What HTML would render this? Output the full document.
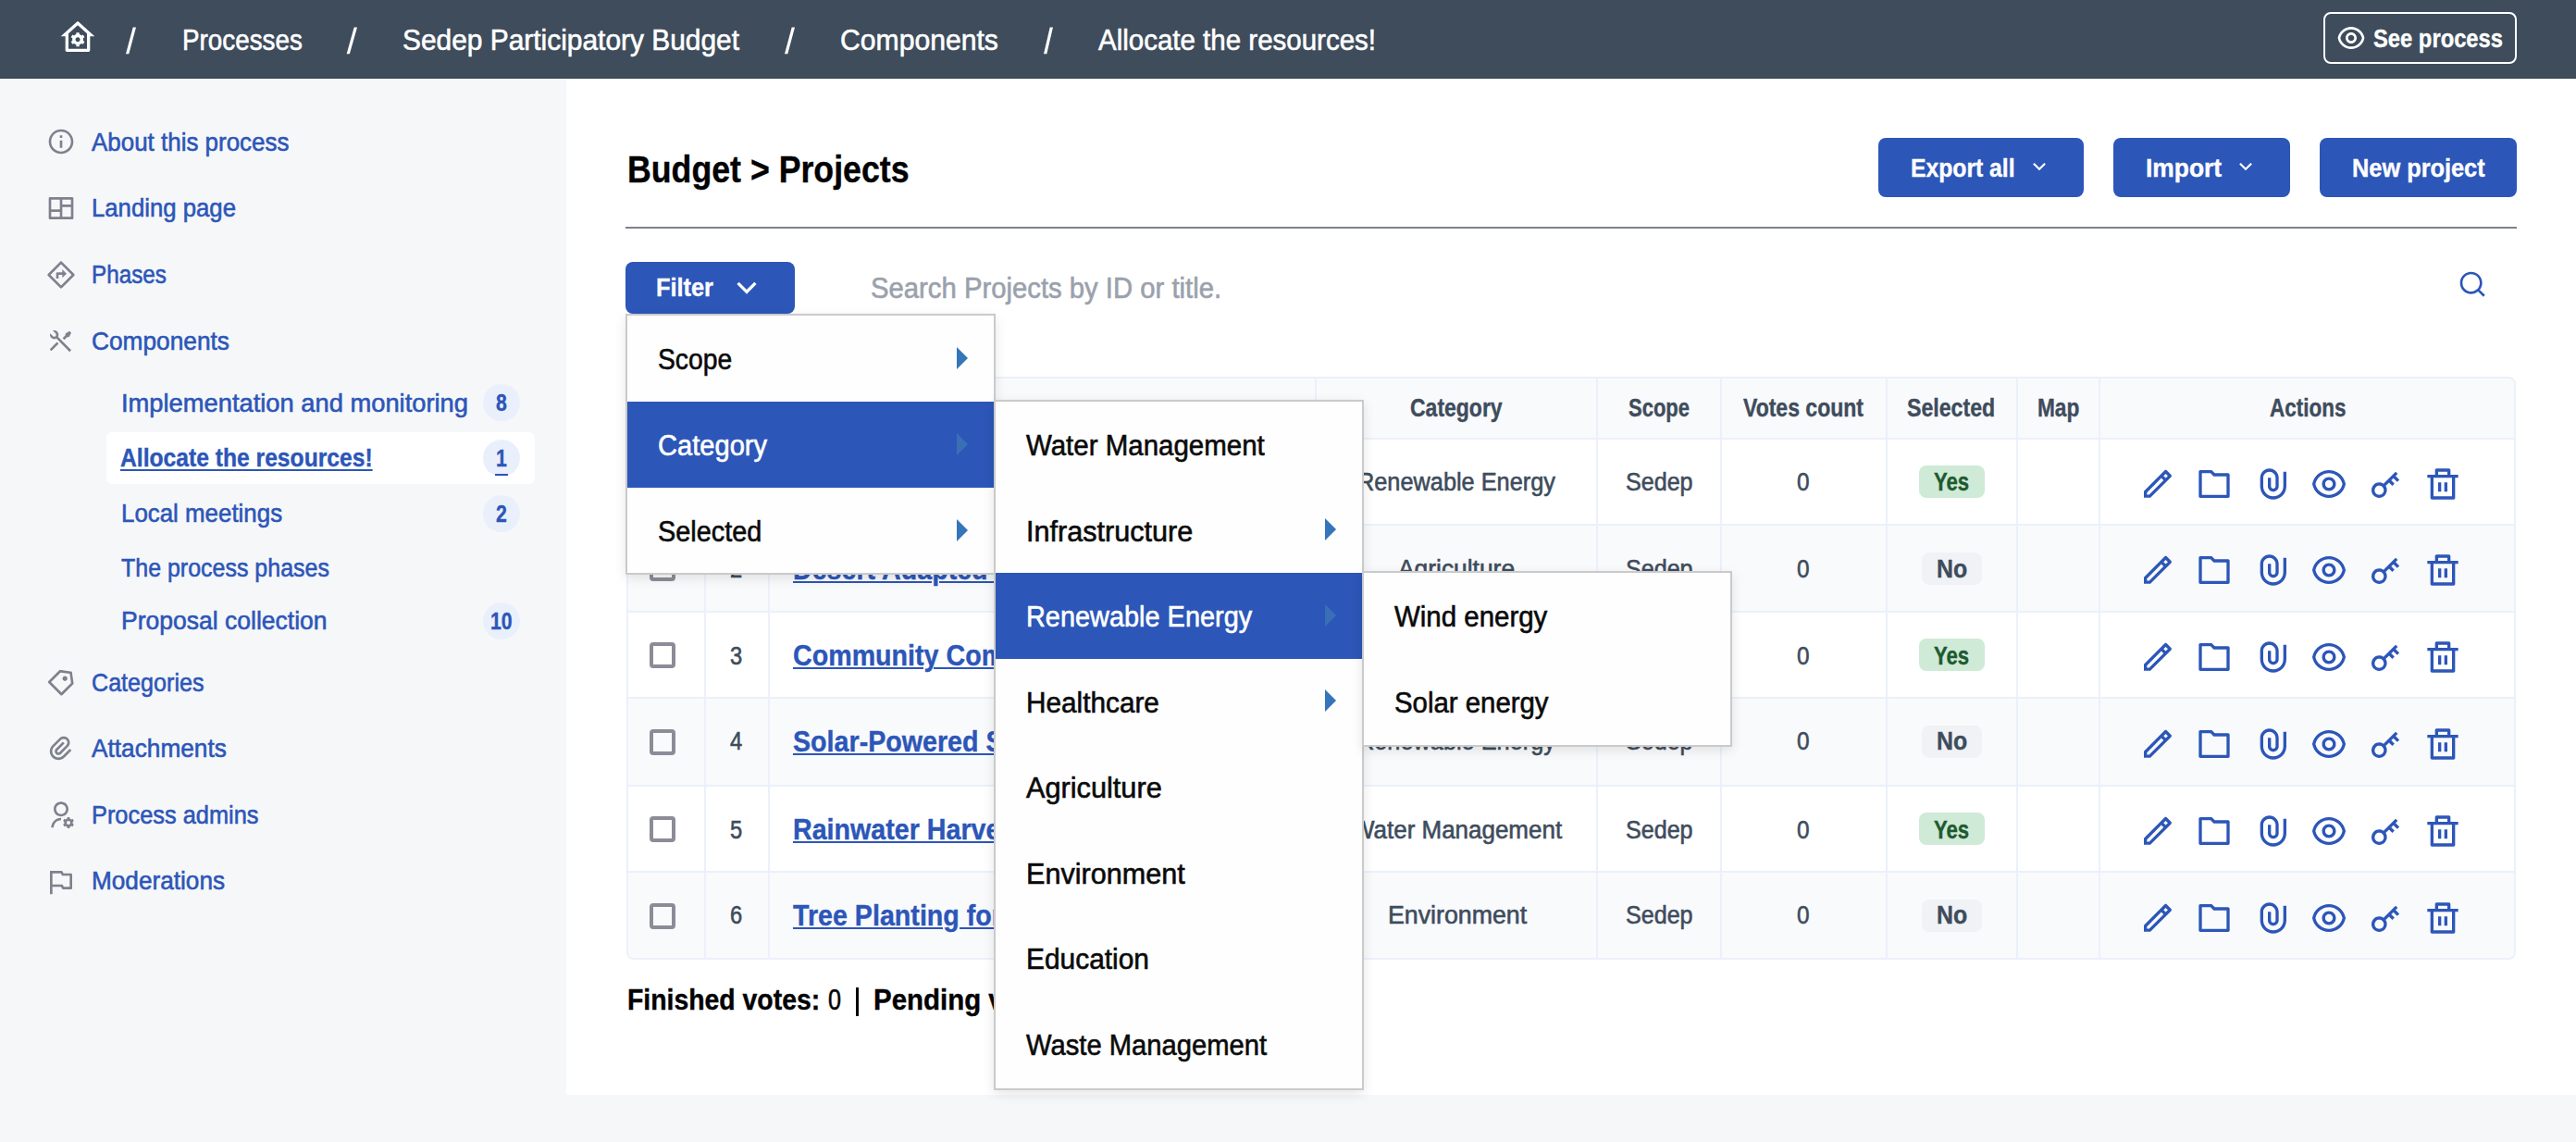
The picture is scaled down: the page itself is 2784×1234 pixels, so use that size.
<!DOCTYPE html>
<html><head><meta charset="utf-8"><style>
html,body{margin:0;padding:0;width:2784px;height:1234px;overflow:hidden;background:#fff}
body{position:relative;font-family:"Liberation Sans",sans-serif}
.t{position:absolute;white-space:nowrap;transform-origin:0 0;-webkit-text-stroke:0.6px}
.b{-webkit-text-stroke:0.4px}
</style></head><body>
<div style="position:absolute;left:0px;top:0px;width:2784px;height:84px;background:#3e4c5c"></div>
<div style="position:absolute;left:0px;top:84px;width:2784px;height:1px;background:#323d4c"></div>
<div style="position:absolute;left:0px;top:85px;width:2784px;height:1px;background:#fff"></div>
<div style="position:absolute;left:0px;top:86px;width:612px;height:1148px;background:#f6f7f9"></div>
<div style="position:absolute;left:612px;top:85px;width:2172px;height:1098px;background:#fff"></div>
<div style="position:absolute;left:612px;top:1183px;width:2172px;height:51px;background:#f6f7f9"></div>
<svg style="position:absolute;left:64px;top:21px;" width="40" height="40" viewBox="0 0 24 24" fill="#fff"><path d="M19 21H5C4.44772 21 4 20.5523 4 20V11L1 11L11.3273 1.6115C11.7087 1.26475 12.2913 1.26475 12.6727 1.6115L23 11L20 11V20C20 20.5523 19.5523 21 19 21ZM6 19H18V9.15745L12 3.70291L6 9.15745V19ZM8.59117 13.8089C8.52937 13.5487 8.49666 13.2783 8.49666 13C8.49666 12.7217 8.52933 12.4513 8.59107 12.1911L7.6 11.6179L8.6 9.88756L9.59186 10.4613C9.98729 10.0705 10.4831 9.78353 11.0363 9.63951V8.5H13.0363V9.63951C13.5894 9.78353 14.0852 10.0705 14.4807 10.4613L15.4725 9.88756L16.4725 11.6179L15.4815 12.1911C15.5432 12.4513 15.5759 12.7217 15.5759 13C15.5759 13.2783 15.5432 13.5487 15.4814 13.8089L16.4725 14.3821L15.4725 16.1124L14.4807 15.5387C14.0852 15.9295 13.5894 16.2165 13.0363 16.3605V17.5H11.0363V16.3605C10.4831 16.2165 9.98729 15.9295 9.59186 15.5387L8.6 16.1124L7.6 14.3821L8.59117 13.8089ZM12.0363 14.5C12.8648 14.5 13.5363 13.8284 13.5363 13C13.5363 12.1716 12.8648 11.5 12.0363 11.5C11.2081 11.5 10.5363 12.1716 10.5363 13C10.5363 13.8284 11.2081 14.5 12.0363 14.5Z"/></svg>
<svg style="position:absolute;left:0;top:0" width="149" height="62"><polygon points="143.7,29.5 147,29.5 139.3,58.2 136,58.2" fill="#fff"/></svg>
<svg style="position:absolute;left:0;top:0" width="388" height="62"><polygon points="382.7,29.5 386,29.5 377.90000000000003,58.2 374.6,58.2" fill="#fff"/></svg>
<svg style="position:absolute;left:0;top:0" width="861" height="62"><polygon points="855.7,29.5 859,29.5 851.3,58.2 848,58.2" fill="#fff"/></svg>
<svg style="position:absolute;left:0;top:0" width="1140" height="62"><polygon points="1134.7,29.5 1138,29.5 1131.3,58.2 1128,58.2" fill="#fff"/></svg>
<div class="t" style="left:197.00px;top:26.51px;font-size:32px;line-height:32px;color:#fff;transform:scaleX(0.8696);">Processes</div>
<div class="t" style="left:435.00px;top:26.51px;font-size:32px;line-height:32px;color:#fff;transform:scaleX(0.9345);">Sedep Participatory Budget</div>
<div class="t" style="left:908.00px;top:26.51px;font-size:32px;line-height:32px;color:#fff;transform:scaleX(0.9421);">Components</div>
<div class="t" style="left:1187.00px;top:26.51px;font-size:32px;line-height:32px;color:#fff;transform:scaleX(0.9217);">Allocate the resources!</div>
<div style="position:absolute;left:2511px;top:13px;width:209px;height:56px;box-sizing:border-box;border:2px solid #fff;border-radius:8px"></div>
<svg style="position:absolute;left:2525px;top:25px;" width="32" height="32" viewBox="0 0 24 24" fill="#fff"><path d="M12.0003 3C17.3924 3 21.8784 6.87976 22.8189 12C21.8784 17.1202 17.3924 21 12.0003 21C6.60812 21 2.12215 17.1202 1.18164 12C2.12215 6.87976 6.60812 3 12.0003 3ZM12.0003 19C16.2359 19 19.8603 16.052 20.7777 12C19.8603 7.94803 16.2359 5 12.0003 5C7.7646 5 4.14022 7.94803 3.22278 12C4.14022 16.052 7.7646 19 12.0003 19ZM12.0003 16.5C9.51498 16.5 7.50026 14.4853 7.50026 12C7.50026 9.51472 9.51498 7.5 12.0003 7.5C14.4855 7.5 16.5003 9.51472 16.5003 12C16.5003 14.4853 14.4855 16.5 12.0003 16.5ZM12.0003 14.5C13.381 14.5 14.5003 13.3807 14.5003 12C14.5003 10.6193 13.381 9.5 12.0003 9.5C10.6196 9.5 9.50026 10.6193 9.50026 12C9.50026 13.3807 10.6196 14.5 12.0003 14.5Z"/></svg>
<div class="t b" style="left:2565.00px;top:27.50px;font-size:28px;line-height:28px;font-weight:700;color:#fff;transform:scaleX(0.8485);">See process</div>
<svg style="position:absolute;left:50px;top:137px;" width="32" height="32" viewBox="0 0 24 24" fill="#7d828d"><path d="M12 22C6.47715 22 2 17.5228 2 12C2 6.47715 6.47715 2 12 2C17.5228 2 22 6.47715 22 12C22 17.5228 17.5228 22 12 22ZM12 20C16.4183 20 20 16.4183 20 12C20 7.58172 16.4183 4 12 4C7.58172 4 4 7.58172 4 12C4 16.4183 7.58172 20 12 20ZM11 7H13V9H11V7ZM11 11H13V17H11V11Z"/></svg>
<div class="t" style="left:98.60px;top:139.60px;font-size:28px;line-height:28px;color:#2c56b8;transform:scaleX(0.9268);">About this process</div>
<svg style="position:absolute;left:50px;top:209px;" width="32" height="32" viewBox="0 0 24 24" fill="#7d828d"><path d="M22 20C22 20.5523 21.5523 21 21 21H3C2.44772 21 2 20.5523 2 20V4C2 3.44772 2.44772 3 3 3H21C21.5523 3 22 3.44772 22 4V20ZM11 15H4V19H11V15ZM20 11H13V19H20V11ZM11 5H4V13H11V5ZM20 5H13V9H20V5Z"/></svg>
<div class="t" style="left:99.00px;top:211.30px;font-size:28px;line-height:28px;color:#2c56b8;transform:scaleX(0.9190);">Landing page</div>
<svg style="position:absolute;left:50px;top:281px;" width="32" height="32" viewBox="0 0 24 24" fill="#7d828d"><path d="M12.7071 1.29289L22.7071 11.2929C23.0976 11.6834 23.0976 12.3166 22.7071 12.7071L12.7071 22.7071C12.3166 23.0976 11.6834 23.0976 11.2929 22.7071L1.29289 12.7071C0.902369 12.3166 0.902369 11.6834 1.29289 11.2929L11.2929 1.29289C11.6834 0.902369 12.3166 0.902369 12.7071 1.29289ZM12 3.41421L3.41421 12L12 20.5858L20.5858 12L12 3.41421ZM13 10V7.5L16.5 11L13 14.5V12H10V15H8V11C8 10.4477 8.44772 10 9 10H13Z"/></svg>
<div class="t" style="left:99.00px;top:283.30px;font-size:28px;line-height:28px;color:#2c56b8;transform:scaleX(0.8663);">Phases</div>
<svg style="position:absolute;left:50px;top:353px;" width="32" height="32" viewBox="0 0 24 24" fill="#7d828d"><path d="M5.32943 3.27158C6.56252 2.8332 7.9923 3.10749 8.97927 4.09446C10.1002 5.21537 10.3019 6.90741 9.58508 8.23385L20.3019 18.9507L18.8877 20.3649L8.17083 9.64806C6.84469 10.3623 5.15422 10.1599 4.03394 9.03964C3.04668 8.05238 2.77246 6.62192 3.21127 5.38853L5.44893 7.62632C6.03472 8.21211 6.98446 8.21211 7.57025 7.62632C8.15603 7.04054 8.15603 6.09079 7.57025 5.50501L5.32943 3.27158ZM15.6963 5.35742L18.8783 3.58965L20.2925 5.00386L18.5247 8.18584L16.757 8.53939L14.6356 10.6607L13.2214 9.24652L15.3427 7.12521L15.6963 5.35742ZM8.62815 12.4285L10.0424 13.8427L4.7391 19.1465C4.34858 19.537 3.71542 19.537 3.32489 19.1465C2.96641 18.788 2.93654 18.2248 3.23522 17.8322L3.32489 17.7323L8.62815 12.4285Z"/></svg>
<div class="t" style="left:99.00px;top:354.80px;font-size:28px;line-height:28px;color:#2c56b8;transform:scaleX(0.9386);">Components</div>
<svg style="position:absolute;left:50px;top:721px;" width="32" height="32" viewBox="0 0 24 24" fill="#7d828d"><path d="M10.9042 2.1001L20.8037 3.51431L22.2179 13.4138L13.0255 22.6062C12.635 22.9967 12.0019 22.9967 11.6113 22.6062L1.71184 12.7067C1.32131 12.3162 1.32131 11.683 1.71184 11.2925L10.9042 2.1001ZM11.6113 4.22142L3.83316 11.9996L12.3184 20.4849L20.0966 12.7067L19.036 5.28208L11.6113 4.22142ZM13.7327 10.5854C12.9516 9.80433 12.9516 8.538 13.7327 7.75695C14.5137 6.9759 15.78 6.9759 16.5611 7.75695C17.3421 8.538 17.3421 9.80433 16.5611 10.5854C15.78 11.3664 14.5137 11.3664 13.7327 10.5854Z"/></svg>
<div class="t" style="left:98.80px;top:723.60px;font-size:28px;line-height:28px;color:#2c56b8;transform:scaleX(0.8974);">Categories</div>
<svg style="position:absolute;left:50px;top:793px;" width="32" height="32" viewBox="0 0 24 24" fill="#7d828d"><path d="M14.8287 7.75737L9.1718 13.4142C8.78127 13.8047 8.78127 14.4379 9.1718 14.8284C9.56232 15.219 10.1955 15.219 10.586 14.8284L16.2429 9.17158C17.4144 8.00001 17.4144 6.10052 16.2429 4.92894C15.0713 3.75737 13.1718 3.75737 12.0002 4.92894L6.34337 10.5858C4.39075 12.5384 4.39075 15.7042 6.34337 17.6569C8.29599 19.6095 11.4618 19.6095 13.4144 17.6569L19.0713 12L20.4855 13.4142L14.8287 19.0711C12.095 21.8047 7.66283 21.8047 4.92916 19.0711C2.19549 16.3374 2.19549 11.9052 4.92916 9.17158L10.586 3.51473C12.5386 1.56211 15.7045 1.56211 17.6571 3.51473C19.6097 5.46735 19.6097 8.63317 17.6571 10.5858L12.0002 16.2427C10.8287 17.4142 8.92916 17.4142 7.75759 16.2427C6.58601 15.0711 6.58601 13.1716 7.75759 12L13.4144 6.34316L14.8287 7.75737Z"/></svg>
<div class="t" style="left:99.00px;top:795.00px;font-size:28px;line-height:28px;color:#2c56b8;transform:scaleX(0.9374);">Attachments</div>
<svg style="position:absolute;left:50px;top:865px;" width="32" height="32" viewBox="0 0 24 24" fill="#7d828d"><path d="M12 14V16C8.68629 16 6 18.6863 6 22H4C4 17.5817 7.58172 14 12 14ZM12 13C8.685 13 6 10.315 6 7C6 3.685 8.685 1 12 1C15.315 1 18 3.685 18 7C18 10.315 15.315 13 12 13ZM12 11C14.21 11 16 9.21 16 7C16 4.79 14.21 3 12 3C9.79 3 8 4.79 8 7C8 9.21 9.79 11 12 11ZM14.5946 18.8115C14.5327 18.5511 14.5 18.2794 14.5 18C14.5 17.7207 14.5327 17.449 14.5945 17.1886L13.6029 16.6161L14.6029 14.884L15.5952 15.4569C15.9883 15.0851 16.4708 14.8026 17.0062 14.6441V13.5H19.0062V14.6441C19.5416 14.8026 20.0241 15.0852 20.4172 15.4569L21.4095 14.884L22.4095 16.6161L21.4179 17.1886C21.4797 17.449 21.5124 17.7207 21.5124 18C21.5124 18.2794 21.4797 18.5511 21.4178 18.8115L22.4095 19.3839L21.4095 21.116L20.4172 20.5431C20.0241 20.9148 19.5416 21.1974 19.0062 21.3559V22.5H17.0062V21.3559C16.4708 21.1974 15.9883 20.9149 15.5952 20.5431L14.6029 21.116L13.6029 19.3839L14.5946 18.8115ZM18.0062 19.5C18.8346 19.5 19.5062 18.8284 19.5062 18C19.5062 17.1716 18.8346 16.5 18.0062 16.5C17.1778 16.5 16.5062 17.1716 16.5062 18C16.5062 18.8284 17.1778 19.5 18.0062 19.5Z"/></svg>
<div class="t" style="left:99.00px;top:866.70px;font-size:28px;line-height:28px;color:#2c56b8;transform:scaleX(0.9059);">Process admins</div>
<svg style="position:absolute;left:50px;top:937px;" width="32" height="32" viewBox="0 0 24 24" fill="#7d828d"><path d="M3 3H12.382C12.7607 3 13.107 3.214 13.2764 3.55279L14 5H20C20.5523 5 21 5.44772 21 6V17C21 17.5523 20.5523 18 20 18H13.618C13.2393 18 12.893 17.786 12.7236 17.4472L12 16H5V22H3V3ZM5 5V14H13.2361L14.2361 16H19V7H12.7639L11.7639 5H5Z"/></svg>
<div class="t" style="left:99.00px;top:938.30px;font-size:28px;line-height:28px;color:#2c56b8;transform:scaleX(0.9351);">Moderations</div>
<div style="position:absolute;left:114.5px;top:467px;width:463px;height:56px;background:#fff;border-radius:6px"></div>
<div class="t" style="left:131.00px;top:421.50px;font-size:28px;line-height:28px;color:#2c56b8;transform:scaleX(0.9753);">Implementation and monitoring</div>
<div style="position:absolute;left:522px;top:415px;width:40px;height:40px;background:#eaf0fb;border-radius:50%"></div>
<div class="t b" style="left:536.05px;top:423.34px;font-size:25px;line-height:25px;font-weight:700;color:#2c56b8;transform:scaleX(0.8500);">8</div>
<div class="t b" style="left:130.00px;top:481.30px;font-size:28px;line-height:28px;font-weight:700;color:#2c56b8;transform:scaleX(0.8804);text-decoration:underline;text-decoration-thickness:2px;text-underline-offset:3px;">Allocate the resources!</div>
<div style="position:absolute;left:522px;top:475px;width:40px;height:40px;background:#eaf0fb;border-radius:50%"></div>
<div class="t b" style="left:536.05px;top:483.34px;font-size:25px;line-height:25px;font-weight:700;color:#2c56b8;transform:scaleX(0.8500);">1</div>
<div style="position:absolute;left:535px;top:512px;width:14px;height:1.5px;background:#2c56b8"></div>
<div class="t" style="left:131.00px;top:541.30px;font-size:28px;line-height:28px;color:#2c56b8;transform:scaleX(0.9243);">Local meetings</div>
<div style="position:absolute;left:522px;top:535px;width:40px;height:40px;background:#eaf0fb;border-radius:50%"></div>
<div class="t b" style="left:536.05px;top:543.34px;font-size:25px;line-height:25px;font-weight:700;color:#2c56b8;transform:scaleX(0.8500);">2</div>
<div class="t" style="left:131.00px;top:599.60px;font-size:28px;line-height:28px;color:#2c56b8;transform:scaleX(0.8920);">The process phases</div>
<div class="t" style="left:131.00px;top:657.30px;font-size:28px;line-height:28px;color:#2c56b8;transform:scaleX(0.9468);">Proposal collection</div>
<div style="position:absolute;left:522px;top:651px;width:40px;height:40px;background:#eaf0fb;border-radius:50%"></div>
<div class="t b" style="left:530.21px;top:659.34px;font-size:25px;line-height:25px;font-weight:700;color:#2c56b8;transform:scaleX(0.8500);">10</div>
<div class="t b" style="left:678.00px;top:162.84px;font-size:40px;line-height:40px;font-weight:700;color:#020203;transform:scaleX(0.8926);">Budget &gt; Projects</div>
<div style="position:absolute;left:676px;top:245px;width:2044px;height:2px;background:#7d828d"></div>
<div style="position:absolute;left:2030px;top:149px;width:222px;height:64px;background:#2c56b8;border-radius:8px"></div>
<div class="t b" style="left:2064.50px;top:167.80px;font-size:28px;line-height:28px;font-weight:700;color:#fff;transform:scaleX(0.8824);">Export all</div>
<svg style="position:absolute;left:2191px;top:167px;" width="26" height="26" viewBox="0 0 24 24" fill="#fff"><path d="M12 13.1716L16.9497 8.22183L18.3639 9.63604L12 16L5.63604 9.63604L7.05025 8.22183L12 13.1716Z"/></svg>
<div style="position:absolute;left:2284px;top:149px;width:191px;height:64px;background:#2c56b8;border-radius:8px"></div>
<div class="t b" style="left:2319.00px;top:167.80px;font-size:28px;line-height:28px;font-weight:700;color:#fff;transform:scaleX(0.9425);">Import</div>
<svg style="position:absolute;left:2414px;top:167px;" width="26" height="26" viewBox="0 0 24 24" fill="#fff"><path d="M12 13.1716L16.9497 8.22183L18.3639 9.63604L12 16L5.63604 9.63604L7.05025 8.22183L12 13.1716Z"/></svg>
<div style="position:absolute;left:2507px;top:149px;width:213px;height:64px;background:#2c56b8;border-radius:8px"></div>
<div class="t b" style="left:2542.00px;top:167.80px;font-size:28px;line-height:28px;font-weight:700;color:#fff;transform:scaleX(0.9052);">New project</div>
<div style="position:absolute;left:676px;top:283px;width:183px;height:56px;background:#2c56b8;border-radius:8px"></div>
<div class="t b" style="left:709.40px;top:297.00px;font-size:28px;line-height:28px;font-weight:700;color:#fff;transform:scaleX(0.9051);">Filter</div>
<svg style="position:absolute;left:787px;top:291px;" width="40" height="40" viewBox="0 0 24 24" fill="#fff"><path d="M12 13.1716L16.9497 8.22183L18.3639 9.63604L12 16L5.63604 9.63604L7.05025 8.22183L12 13.1716Z"/></svg>
<div class="t" style="left:940.50px;top:296.46px;font-size:31px;line-height:31px;color:#9aa1ac;transform:scaleX(0.9445);">Search Projects by ID or title.</div>
<svg style="position:absolute;left:2656px;top:291px;" width="32" height="32" viewBox="0 0 24 24" fill="#2c56b8"><path d="M18.031 16.6168L22.3137 20.8995L20.8995 22.3137L16.6168 18.031C15.0769 19.263 13.124 20 11 20C6.032 20 2 15.968 2 11C2 6.032 6.032 2 11 2C15.968 2 20 6.032 20 11C20 13.124 19.263 15.0769 18.031 16.6168ZM16.0247 15.8748C17.2475 14.6146 18 12.8956 18 11C18 7.1325 14.8675 4 11 4C7.1325 4 4 7.1325 4 11C4 14.8675 7.1325 18 11 18C12.8956 18 14.6146 17.2475 15.8748 16.0247L16.0247 15.8748Z"/></svg>
<div style="position:absolute;left:677px;top:407px;width:2042px;height:630px;box-sizing:border-box;border:2px solid #ebf0fb;border-radius:8px;background:#fff;overflow:hidden"></div>
<div style="position:absolute;left:679px;top:409px;width:2038px;height:65px;background:#f9fafc;border-radius:6px 6px 0 0"></div>
<div style="position:absolute;left:679px;top:567px;width:2038px;height:94px;background:#f9fafc;"></div>
<div style="position:absolute;left:679px;top:754px;width:2038px;height:95px;background:#f9fafc;"></div>
<div style="position:absolute;left:679px;top:942px;width:2038px;height:93px;background:#f9fafc;border-radius:0 0 6px 6px;"></div>
<div style="position:absolute;left:679px;top:473px;width:2038px;height:2px;background:#ebf0fb"></div>
<div style="position:absolute;left:679px;top:566px;width:2038px;height:2px;background:#ebf0fb"></div>
<div style="position:absolute;left:679px;top:660px;width:2038px;height:2px;background:#ebf0fb"></div>
<div style="position:absolute;left:679px;top:753px;width:2038px;height:2px;background:#ebf0fb"></div>
<div style="position:absolute;left:679px;top:848px;width:2038px;height:2px;background:#ebf0fb"></div>
<div style="position:absolute;left:679px;top:941px;width:2038px;height:2px;background:#ebf0fb"></div>
<div style="position:absolute;left:761px;top:409px;width:2px;height:626px;background:#ebf0fb"></div>
<div style="position:absolute;left:830px;top:409px;width:2px;height:626px;background:#ebf0fb"></div>
<div style="position:absolute;left:1420.7px;top:409px;width:2px;height:626px;background:#ebf0fb"></div>
<div style="position:absolute;left:1725px;top:409px;width:2px;height:626px;background:#ebf0fb"></div>
<div style="position:absolute;left:1859px;top:409px;width:2px;height:626px;background:#ebf0fb"></div>
<div style="position:absolute;left:2037.7px;top:409px;width:2px;height:626px;background:#ebf0fb"></div>
<div style="position:absolute;left:2179px;top:409px;width:2px;height:626px;background:#ebf0fb"></div>
<div style="position:absolute;left:2268px;top:409px;width:2px;height:626px;background:#ebf0fb"></div>
<div class="t b" style="left:1524.00px;top:428.14px;font-size:27px;line-height:27px;font-weight:700;color:#3e4c5c;transform:scaleX(0.8513);">Category</div>
<div class="t b" style="left:1760.00px;top:428.14px;font-size:27px;line-height:27px;font-weight:700;color:#3e4c5c;transform:scaleX(0.8148);">Scope</div>
<div class="t b" style="left:1884.00px;top:428.14px;font-size:27px;line-height:27px;font-weight:700;color:#3e4c5c;transform:scaleX(0.8525);">Votes count</div>
<div class="t b" style="left:2061.40px;top:428.14px;font-size:27px;line-height:27px;font-weight:700;color:#3e4c5c;transform:scaleX(0.8568);">Selected</div>
<div class="t b" style="left:2201.70px;top:428.14px;font-size:27px;line-height:27px;font-weight:700;color:#3e4c5c;transform:scaleX(0.8389);">Map</div>
<div class="t b" style="left:2452.60px;top:428.14px;font-size:27px;line-height:27px;font-weight:700;color:#3e4c5c;transform:scaleX(0.8323);">Actions</div>
<div class="t b" style="left:784.93px;top:428.14px;font-size:27px;line-height:27px;font-weight:700;color:#3e4c5c;transform:scaleX(0.8200);">ID</div>
<div class="t b" style="left:856.00px;top:428.14px;font-size:27px;line-height:27px;font-weight:700;color:#3e4c5c;transform:scaleX(0.8200);">Title</div>
<div style="position:absolute;left:702px;top:506.5px;width:28px;height:28px;box-sizing:border-box;border:4px solid #8b8c97;border-radius:4px"></div>
<div class="t" style="left:789.40px;top:508.44px;font-size:27px;line-height:27px;color:#3e4c5c;transform:scaleX(0.8800);">1</div>
<div class="t b" style="left:857.00px;top:505.21px;font-size:32px;line-height:32px;font-weight:700;color:#2c56b8;transform:scaleX(0.8950);text-decoration:underline;text-decoration-thickness:2px;text-underline-offset:2px;">Sustainable Urban Farming</div>
<div class="t" style="left:1467.00px;top:508.44px;font-size:27px;line-height:27px;color:#3e4c5c;transform:scaleX(0.9376);">Renewable Energy</div>
<div class="t" style="left:1756.80px;top:508.44px;font-size:27px;line-height:27px;color:#3e4c5c;transform:scaleX(0.9295);">Sedep</div>
<div class="t" style="left:1942.25px;top:508.44px;font-size:27px;line-height:27px;color:#3e4c5c;transform:scaleX(0.9000);">0</div>
<div style="position:absolute;left:2074px;top:503.0px;width:71px;height:35px;background:#cfead6;border-radius:8px"></div>
<div class="t b" style="left:2090.43px;top:508.44px;font-size:27px;line-height:27px;font-weight:700;color:#1f5a30;transform:scaleX(0.8200);">Yes</div>
<svg style="position:absolute;left:2312px;top:502.5px;" width="40" height="40" viewBox="0 0 24 24" fill="#2c56b8"><path d="M15.7279 9.57627L14.3137 8.16206L5 17.4758V18.89H6.41421L15.7279 9.57627ZM17.1421 8.16206L18.5563 6.74785L17.1421 5.33363L15.7279 6.74785L17.1421 8.16206ZM7.24264 20.89H3V16.6473L16.435 3.21231C16.8256 2.82179 17.4587 2.82179 17.8492 3.21231L20.6777 6.04074C21.0682 6.43126 21.0682 7.06443 20.6777 7.45495L7.24264 20.89Z"/></svg>
<svg style="position:absolute;left:2373px;top:502.5px;" width="40" height="40" viewBox="0 0 24 24" fill="#2c56b8"><path d="M4 5V19H20V7H11.5858L9.58579 5H4ZM12.4142 5H21C21.5523 5 22 5.44772 22 6V20C22 20.5523 21.5523 21 21 21H3C2.44772 21 2 20.5523 2 20V4C2 3.44772 2.44772 3 3 3H10.4142L12.4142 5Z"/></svg>
<svg style="position:absolute;left:2436px;top:502.5px;" width="40" height="40" viewBox="0 0 24 24" fill="#2c56b8"><path d="M14 13.5V8C14 5.79086 12.2091 4 10 4C7.79086 4 6 5.79086 6 8V13.5C6 17.0899 8.91015 20 12.5 20C16.0899 20 19 17.0899 19 13.5V4H21V13.5C21 18.1944 17.1944 22 12.5 22C7.80558 22 4 18.1944 4 13.5V8C4 4.68629 6.68629 2 10 2C13.3137 2 16 4.68629 16 8V13.5C16 15.433 14.433 17 12.5 17C10.567 17 9 15.433 9 13.5V8H11V13.5C11 14.3284 11.6716 15 12.5 15C13.3284 15 14 14.3284 14 13.5Z"/></svg>
<svg style="position:absolute;left:2497px;top:502.5px;" width="40" height="40" viewBox="0 0 24 24" fill="#2c56b8"><path d="M12.0003 3C17.3924 3 21.8784 6.87976 22.8189 12C21.8784 17.1202 17.3924 21 12.0003 21C6.60812 21 2.12215 17.1202 1.18164 12C2.12215 6.87976 6.60812 3 12.0003 3ZM12.0003 19C16.2359 19 19.8603 16.052 20.7777 12C19.8603 7.94803 16.2359 5 12.0003 5C7.7646 5 4.14022 7.94803 3.22278 12C4.14022 16.052 7.7646 19 12.0003 19ZM12.0003 16.5C9.51498 16.5 7.50026 14.4853 7.50026 12C7.50026 9.51472 9.51498 7.5 12.0003 7.5C14.4855 7.5 16.5003 9.51472 16.5003 12C16.5003 14.4853 14.4855 16.5 12.0003 16.5ZM12.0003 14.5C13.381 14.5 14.5003 13.3807 14.5003 12C14.5003 10.6193 13.381 9.5 12.0003 9.5C10.6196 9.5 9.50026 10.6193 9.50026 12C9.50026 13.3807 10.6196 14.5 12.0003 14.5Z"/></svg>
<svg style="position:absolute;left:2558px;top:502.5px;" width="40" height="40" viewBox="0 0 24 24" fill="#2c56b8"><path d="M10.7577 11.8281L18.6066 3.97919L20.0208 5.3934L18.6066 6.80761L21.0815 9.28249L19.6673 10.6967L17.1924 8.22183L15.7782 9.63604L17.8995 11.7574L16.4853 13.1716L14.364 11.0503L12.1719 13.2423C13.4581 15.1837 13.246 17.8251 11.5355 19.5355C9.58291 21.4882 6.41709 21.4882 4.46447 19.5355C2.51184 17.5829 2.51184 14.4171 4.46447 12.4645C6.17493 10.754 8.81633 10.5419 10.7577 11.8281ZM10.1213 18.1213C11.2929 16.9497 11.2929 15.0503 10.1213 13.8787C8.94975 12.7071 7.05025 12.7071 5.87868 13.8787C4.70711 15.0503 4.70711 16.9497 5.87868 18.1213C7.05025 19.2929 8.94975 19.2929 10.1213 18.1213Z"/></svg>
<svg style="position:absolute;left:2620px;top:502.5px;" width="40" height="40" viewBox="0 0 24 24" fill="#2c56b8"><path d="M17 6H22V8H20V21C20 21.5523 19.5523 22 19 22H5C4.44772 22 4 21.5523 4 21V8H2V6H7V3C7 2.44772 7.44772 2 8 2H16C16.5523 2 17 2.44772 17 3V6ZM18 8H6V20H18V8ZM9 11H11V17H9V11ZM13 11H15V17H13V11ZM9 4V6H15V4H9Z"/></svg>
<div style="position:absolute;left:702px;top:600.0px;width:28px;height:28px;box-sizing:border-box;border:4px solid #8b8c97;border-radius:4px"></div>
<div class="t" style="left:789.40px;top:602.04px;font-size:27px;line-height:27px;color:#3e4c5c;transform:scaleX(0.8800);">2</div>
<div class="t b" style="left:857.00px;top:598.81px;font-size:32px;line-height:32px;font-weight:700;color:#2c56b8;transform:scaleX(0.8950);text-decoration:underline;text-decoration-thickness:2px;text-underline-offset:2px;">Desert Adapted Agriculture</div>
<div class="t" style="left:1511.00px;top:602.04px;font-size:27px;line-height:27px;color:#3e4c5c;transform:scaleX(0.9767);">Agriculture</div>
<div class="t" style="left:1756.80px;top:602.04px;font-size:27px;line-height:27px;color:#3e4c5c;transform:scaleX(0.9295);">Sedep</div>
<div class="t" style="left:1942.25px;top:602.04px;font-size:27px;line-height:27px;color:#3e4c5c;transform:scaleX(0.9000);">0</div>
<div style="position:absolute;left:2077px;top:596.5px;width:65px;height:35px;background:#f0f2f5;border-radius:8px"></div>
<div class="t b" style="left:2092.94px;top:602.04px;font-size:27px;line-height:27px;font-weight:700;color:#3e4c5c;transform:scaleX(0.9200);">No</div>
<svg style="position:absolute;left:2312px;top:596.0px;" width="40" height="40" viewBox="0 0 24 24" fill="#2c56b8"><path d="M15.7279 9.57627L14.3137 8.16206L5 17.4758V18.89H6.41421L15.7279 9.57627ZM17.1421 8.16206L18.5563 6.74785L17.1421 5.33363L15.7279 6.74785L17.1421 8.16206ZM7.24264 20.89H3V16.6473L16.435 3.21231C16.8256 2.82179 17.4587 2.82179 17.8492 3.21231L20.6777 6.04074C21.0682 6.43126 21.0682 7.06443 20.6777 7.45495L7.24264 20.89Z"/></svg>
<svg style="position:absolute;left:2373px;top:596.0px;" width="40" height="40" viewBox="0 0 24 24" fill="#2c56b8"><path d="M4 5V19H20V7H11.5858L9.58579 5H4ZM12.4142 5H21C21.5523 5 22 5.44772 22 6V20C22 20.5523 21.5523 21 21 21H3C2.44772 21 2 20.5523 2 20V4C2 3.44772 2.44772 3 3 3H10.4142L12.4142 5Z"/></svg>
<svg style="position:absolute;left:2436px;top:596.0px;" width="40" height="40" viewBox="0 0 24 24" fill="#2c56b8"><path d="M14 13.5V8C14 5.79086 12.2091 4 10 4C7.79086 4 6 5.79086 6 8V13.5C6 17.0899 8.91015 20 12.5 20C16.0899 20 19 17.0899 19 13.5V4H21V13.5C21 18.1944 17.1944 22 12.5 22C7.80558 22 4 18.1944 4 13.5V8C4 4.68629 6.68629 2 10 2C13.3137 2 16 4.68629 16 8V13.5C16 15.433 14.433 17 12.5 17C10.567 17 9 15.433 9 13.5V8H11V13.5C11 14.3284 11.6716 15 12.5 15C13.3284 15 14 14.3284 14 13.5Z"/></svg>
<svg style="position:absolute;left:2497px;top:596.0px;" width="40" height="40" viewBox="0 0 24 24" fill="#2c56b8"><path d="M12.0003 3C17.3924 3 21.8784 6.87976 22.8189 12C21.8784 17.1202 17.3924 21 12.0003 21C6.60812 21 2.12215 17.1202 1.18164 12C2.12215 6.87976 6.60812 3 12.0003 3ZM12.0003 19C16.2359 19 19.8603 16.052 20.7777 12C19.8603 7.94803 16.2359 5 12.0003 5C7.7646 5 4.14022 7.94803 3.22278 12C4.14022 16.052 7.7646 19 12.0003 19ZM12.0003 16.5C9.51498 16.5 7.50026 14.4853 7.50026 12C7.50026 9.51472 9.51498 7.5 12.0003 7.5C14.4855 7.5 16.5003 9.51472 16.5003 12C16.5003 14.4853 14.4855 16.5 12.0003 16.5ZM12.0003 14.5C13.381 14.5 14.5003 13.3807 14.5003 12C14.5003 10.6193 13.381 9.5 12.0003 9.5C10.6196 9.5 9.50026 10.6193 9.50026 12C9.50026 13.3807 10.6196 14.5 12.0003 14.5Z"/></svg>
<svg style="position:absolute;left:2558px;top:596.0px;" width="40" height="40" viewBox="0 0 24 24" fill="#2c56b8"><path d="M10.7577 11.8281L18.6066 3.97919L20.0208 5.3934L18.6066 6.80761L21.0815 9.28249L19.6673 10.6967L17.1924 8.22183L15.7782 9.63604L17.8995 11.7574L16.4853 13.1716L14.364 11.0503L12.1719 13.2423C13.4581 15.1837 13.246 17.8251 11.5355 19.5355C9.58291 21.4882 6.41709 21.4882 4.46447 19.5355C2.51184 17.5829 2.51184 14.4171 4.46447 12.4645C6.17493 10.754 8.81633 10.5419 10.7577 11.8281ZM10.1213 18.1213C11.2929 16.9497 11.2929 15.0503 10.1213 13.8787C8.94975 12.7071 7.05025 12.7071 5.87868 13.8787C4.70711 15.0503 4.70711 16.9497 5.87868 18.1213C7.05025 19.2929 8.94975 19.2929 10.1213 18.1213Z"/></svg>
<svg style="position:absolute;left:2620px;top:596.0px;" width="40" height="40" viewBox="0 0 24 24" fill="#2c56b8"><path d="M17 6H22V8H20V21C20 21.5523 19.5523 22 19 22H5C4.44772 22 4 21.5523 4 21V8H2V6H7V3C7 2.44772 7.44772 2 8 2H16C16.5523 2 17 2.44772 17 3V6ZM18 8H6V20H18V8ZM9 11H11V17H9V11ZM13 11H15V17H13V11ZM9 4V6H15V4H9Z"/></svg>
<div style="position:absolute;left:702px;top:693.5px;width:28px;height:28px;box-sizing:border-box;border:4px solid #8b8c97;border-radius:4px"></div>
<div class="t" style="left:789.40px;top:695.54px;font-size:27px;line-height:27px;color:#3e4c5c;transform:scaleX(0.8800);">3</div>
<div class="t b" style="left:857.00px;top:692.31px;font-size:32px;line-height:32px;font-weight:700;color:#2c56b8;transform:scaleX(0.8950);text-decoration:underline;text-decoration-thickness:2px;text-underline-offset:2px;">Community Composting Centers</div>
<div class="t" style="left:1467.00px;top:695.54px;font-size:27px;line-height:27px;color:#3e4c5c;transform:scaleX(0.9376);">Renewable Energy</div>
<div class="t" style="left:1756.80px;top:695.54px;font-size:27px;line-height:27px;color:#3e4c5c;transform:scaleX(0.9295);">Sedep</div>
<div class="t" style="left:1942.25px;top:695.54px;font-size:27px;line-height:27px;color:#3e4c5c;transform:scaleX(0.9000);">0</div>
<div style="position:absolute;left:2074px;top:690.0px;width:71px;height:35px;background:#cfead6;border-radius:8px"></div>
<div class="t b" style="left:2090.43px;top:695.54px;font-size:27px;line-height:27px;font-weight:700;color:#1f5a30;transform:scaleX(0.8200);">Yes</div>
<svg style="position:absolute;left:2312px;top:689.5px;" width="40" height="40" viewBox="0 0 24 24" fill="#2c56b8"><path d="M15.7279 9.57627L14.3137 8.16206L5 17.4758V18.89H6.41421L15.7279 9.57627ZM17.1421 8.16206L18.5563 6.74785L17.1421 5.33363L15.7279 6.74785L17.1421 8.16206ZM7.24264 20.89H3V16.6473L16.435 3.21231C16.8256 2.82179 17.4587 2.82179 17.8492 3.21231L20.6777 6.04074C21.0682 6.43126 21.0682 7.06443 20.6777 7.45495L7.24264 20.89Z"/></svg>
<svg style="position:absolute;left:2373px;top:689.5px;" width="40" height="40" viewBox="0 0 24 24" fill="#2c56b8"><path d="M4 5V19H20V7H11.5858L9.58579 5H4ZM12.4142 5H21C21.5523 5 22 5.44772 22 6V20C22 20.5523 21.5523 21 21 21H3C2.44772 21 2 20.5523 2 20V4C2 3.44772 2.44772 3 3 3H10.4142L12.4142 5Z"/></svg>
<svg style="position:absolute;left:2436px;top:689.5px;" width="40" height="40" viewBox="0 0 24 24" fill="#2c56b8"><path d="M14 13.5V8C14 5.79086 12.2091 4 10 4C7.79086 4 6 5.79086 6 8V13.5C6 17.0899 8.91015 20 12.5 20C16.0899 20 19 17.0899 19 13.5V4H21V13.5C21 18.1944 17.1944 22 12.5 22C7.80558 22 4 18.1944 4 13.5V8C4 4.68629 6.68629 2 10 2C13.3137 2 16 4.68629 16 8V13.5C16 15.433 14.433 17 12.5 17C10.567 17 9 15.433 9 13.5V8H11V13.5C11 14.3284 11.6716 15 12.5 15C13.3284 15 14 14.3284 14 13.5Z"/></svg>
<svg style="position:absolute;left:2497px;top:689.5px;" width="40" height="40" viewBox="0 0 24 24" fill="#2c56b8"><path d="M12.0003 3C17.3924 3 21.8784 6.87976 22.8189 12C21.8784 17.1202 17.3924 21 12.0003 21C6.60812 21 2.12215 17.1202 1.18164 12C2.12215 6.87976 6.60812 3 12.0003 3ZM12.0003 19C16.2359 19 19.8603 16.052 20.7777 12C19.8603 7.94803 16.2359 5 12.0003 5C7.7646 5 4.14022 7.94803 3.22278 12C4.14022 16.052 7.7646 19 12.0003 19ZM12.0003 16.5C9.51498 16.5 7.50026 14.4853 7.50026 12C7.50026 9.51472 9.51498 7.5 12.0003 7.5C14.4855 7.5 16.5003 9.51472 16.5003 12C16.5003 14.4853 14.4855 16.5 12.0003 16.5ZM12.0003 14.5C13.381 14.5 14.5003 13.3807 14.5003 12C14.5003 10.6193 13.381 9.5 12.0003 9.5C10.6196 9.5 9.50026 10.6193 9.50026 12C9.50026 13.3807 10.6196 14.5 12.0003 14.5Z"/></svg>
<svg style="position:absolute;left:2558px;top:689.5px;" width="40" height="40" viewBox="0 0 24 24" fill="#2c56b8"><path d="M10.7577 11.8281L18.6066 3.97919L20.0208 5.3934L18.6066 6.80761L21.0815 9.28249L19.6673 10.6967L17.1924 8.22183L15.7782 9.63604L17.8995 11.7574L16.4853 13.1716L14.364 11.0503L12.1719 13.2423C13.4581 15.1837 13.246 17.8251 11.5355 19.5355C9.58291 21.4882 6.41709 21.4882 4.46447 19.5355C2.51184 17.5829 2.51184 14.4171 4.46447 12.4645C6.17493 10.754 8.81633 10.5419 10.7577 11.8281ZM10.1213 18.1213C11.2929 16.9497 11.2929 15.0503 10.1213 13.8787C8.94975 12.7071 7.05025 12.7071 5.87868 13.8787C4.70711 15.0503 4.70711 16.9497 5.87868 18.1213C7.05025 19.2929 8.94975 19.2929 10.1213 18.1213Z"/></svg>
<svg style="position:absolute;left:2620px;top:689.5px;" width="40" height="40" viewBox="0 0 24 24" fill="#2c56b8"><path d="M17 6H22V8H20V21C20 21.5523 19.5523 22 19 22H5C4.44772 22 4 21.5523 4 21V8H2V6H7V3C7 2.44772 7.44772 2 8 2H16C16.5523 2 17 2.44772 17 3V6ZM18 8H6V20H18V8ZM9 11H11V17H9V11ZM13 11H15V17H13V11ZM9 4V6H15V4H9Z"/></svg>
<div style="position:absolute;left:702px;top:787.5px;width:28px;height:28px;box-sizing:border-box;border:4px solid #8b8c97;border-radius:4px"></div>
<div class="t" style="left:789.40px;top:788.44px;font-size:27px;line-height:27px;color:#3e4c5c;transform:scaleX(0.8800);">4</div>
<div class="t b" style="left:857.00px;top:785.21px;font-size:32px;line-height:32px;font-weight:700;color:#2c56b8;transform:scaleX(0.8950);text-decoration:underline;text-decoration-thickness:2px;text-underline-offset:2px;">Solar-Powered Street Lights</div>
<div class="t" style="left:1467.00px;top:788.44px;font-size:27px;line-height:27px;color:#3e4c5c;transform:scaleX(0.9376);">Renewable Energy</div>
<div class="t" style="left:1756.80px;top:788.44px;font-size:27px;line-height:27px;color:#3e4c5c;transform:scaleX(0.9295);">Sedep</div>
<div class="t" style="left:1942.25px;top:788.44px;font-size:27px;line-height:27px;color:#3e4c5c;transform:scaleX(0.9000);">0</div>
<div style="position:absolute;left:2077px;top:784.0px;width:65px;height:35px;background:#f0f2f5;border-radius:8px"></div>
<div class="t b" style="left:2092.94px;top:788.44px;font-size:27px;line-height:27px;font-weight:700;color:#3e4c5c;transform:scaleX(0.9200);">No</div>
<svg style="position:absolute;left:2312px;top:783.5px;" width="40" height="40" viewBox="0 0 24 24" fill="#2c56b8"><path d="M15.7279 9.57627L14.3137 8.16206L5 17.4758V18.89H6.41421L15.7279 9.57627ZM17.1421 8.16206L18.5563 6.74785L17.1421 5.33363L15.7279 6.74785L17.1421 8.16206ZM7.24264 20.89H3V16.6473L16.435 3.21231C16.8256 2.82179 17.4587 2.82179 17.8492 3.21231L20.6777 6.04074C21.0682 6.43126 21.0682 7.06443 20.6777 7.45495L7.24264 20.89Z"/></svg>
<svg style="position:absolute;left:2373px;top:783.5px;" width="40" height="40" viewBox="0 0 24 24" fill="#2c56b8"><path d="M4 5V19H20V7H11.5858L9.58579 5H4ZM12.4142 5H21C21.5523 5 22 5.44772 22 6V20C22 20.5523 21.5523 21 21 21H3C2.44772 21 2 20.5523 2 20V4C2 3.44772 2.44772 3 3 3H10.4142L12.4142 5Z"/></svg>
<svg style="position:absolute;left:2436px;top:783.5px;" width="40" height="40" viewBox="0 0 24 24" fill="#2c56b8"><path d="M14 13.5V8C14 5.79086 12.2091 4 10 4C7.79086 4 6 5.79086 6 8V13.5C6 17.0899 8.91015 20 12.5 20C16.0899 20 19 17.0899 19 13.5V4H21V13.5C21 18.1944 17.1944 22 12.5 22C7.80558 22 4 18.1944 4 13.5V8C4 4.68629 6.68629 2 10 2C13.3137 2 16 4.68629 16 8V13.5C16 15.433 14.433 17 12.5 17C10.567 17 9 15.433 9 13.5V8H11V13.5C11 14.3284 11.6716 15 12.5 15C13.3284 15 14 14.3284 14 13.5Z"/></svg>
<svg style="position:absolute;left:2497px;top:783.5px;" width="40" height="40" viewBox="0 0 24 24" fill="#2c56b8"><path d="M12.0003 3C17.3924 3 21.8784 6.87976 22.8189 12C21.8784 17.1202 17.3924 21 12.0003 21C6.60812 21 2.12215 17.1202 1.18164 12C2.12215 6.87976 6.60812 3 12.0003 3ZM12.0003 19C16.2359 19 19.8603 16.052 20.7777 12C19.8603 7.94803 16.2359 5 12.0003 5C7.7646 5 4.14022 7.94803 3.22278 12C4.14022 16.052 7.7646 19 12.0003 19ZM12.0003 16.5C9.51498 16.5 7.50026 14.4853 7.50026 12C7.50026 9.51472 9.51498 7.5 12.0003 7.5C14.4855 7.5 16.5003 9.51472 16.5003 12C16.5003 14.4853 14.4855 16.5 12.0003 16.5ZM12.0003 14.5C13.381 14.5 14.5003 13.3807 14.5003 12C14.5003 10.6193 13.381 9.5 12.0003 9.5C10.6196 9.5 9.50026 10.6193 9.50026 12C9.50026 13.3807 10.6196 14.5 12.0003 14.5Z"/></svg>
<svg style="position:absolute;left:2558px;top:783.5px;" width="40" height="40" viewBox="0 0 24 24" fill="#2c56b8"><path d="M10.7577 11.8281L18.6066 3.97919L20.0208 5.3934L18.6066 6.80761L21.0815 9.28249L19.6673 10.6967L17.1924 8.22183L15.7782 9.63604L17.8995 11.7574L16.4853 13.1716L14.364 11.0503L12.1719 13.2423C13.4581 15.1837 13.246 17.8251 11.5355 19.5355C9.58291 21.4882 6.41709 21.4882 4.46447 19.5355C2.51184 17.5829 2.51184 14.4171 4.46447 12.4645C6.17493 10.754 8.81633 10.5419 10.7577 11.8281ZM10.1213 18.1213C11.2929 16.9497 11.2929 15.0503 10.1213 13.8787C8.94975 12.7071 7.05025 12.7071 5.87868 13.8787C4.70711 15.0503 4.70711 16.9497 5.87868 18.1213C7.05025 19.2929 8.94975 19.2929 10.1213 18.1213Z"/></svg>
<svg style="position:absolute;left:2620px;top:783.5px;" width="40" height="40" viewBox="0 0 24 24" fill="#2c56b8"><path d="M17 6H22V8H20V21C20 21.5523 19.5523 22 19 22H5C4.44772 22 4 21.5523 4 21V8H2V6H7V3C7 2.44772 7.44772 2 8 2H16C16.5523 2 17 2.44772 17 3V6ZM18 8H6V20H18V8ZM9 11H11V17H9V11ZM13 11H15V17H13V11ZM9 4V6H15V4H9Z"/></svg>
<div style="position:absolute;left:702px;top:881.5px;width:28px;height:28px;box-sizing:border-box;border:4px solid #8b8c97;border-radius:4px"></div>
<div class="t" style="left:789.40px;top:883.64px;font-size:27px;line-height:27px;color:#3e4c5c;transform:scaleX(0.8800);">5</div>
<div class="t b" style="left:857.00px;top:880.41px;font-size:32px;line-height:32px;font-weight:700;color:#2c56b8;transform:scaleX(0.8950);text-decoration:underline;text-decoration-thickness:2px;text-underline-offset:2px;">Rainwater Harvesting Systems</div>
<div class="t" style="left:1460.50px;top:883.64px;font-size:27px;line-height:27px;color:#3e4c5c;transform:scaleX(0.9619);">Water Management</div>
<div class="t" style="left:1756.80px;top:883.64px;font-size:27px;line-height:27px;color:#3e4c5c;transform:scaleX(0.9295);">Sedep</div>
<div class="t" style="left:1942.25px;top:883.64px;font-size:27px;line-height:27px;color:#3e4c5c;transform:scaleX(0.9000);">0</div>
<div style="position:absolute;left:2074px;top:878.0px;width:71px;height:35px;background:#cfead6;border-radius:8px"></div>
<div class="t b" style="left:2090.43px;top:883.64px;font-size:27px;line-height:27px;font-weight:700;color:#1f5a30;transform:scaleX(0.8200);">Yes</div>
<svg style="position:absolute;left:2312px;top:877.5px;" width="40" height="40" viewBox="0 0 24 24" fill="#2c56b8"><path d="M15.7279 9.57627L14.3137 8.16206L5 17.4758V18.89H6.41421L15.7279 9.57627ZM17.1421 8.16206L18.5563 6.74785L17.1421 5.33363L15.7279 6.74785L17.1421 8.16206ZM7.24264 20.89H3V16.6473L16.435 3.21231C16.8256 2.82179 17.4587 2.82179 17.8492 3.21231L20.6777 6.04074C21.0682 6.43126 21.0682 7.06443 20.6777 7.45495L7.24264 20.89Z"/></svg>
<svg style="position:absolute;left:2373px;top:877.5px;" width="40" height="40" viewBox="0 0 24 24" fill="#2c56b8"><path d="M4 5V19H20V7H11.5858L9.58579 5H4ZM12.4142 5H21C21.5523 5 22 5.44772 22 6V20C22 20.5523 21.5523 21 21 21H3C2.44772 21 2 20.5523 2 20V4C2 3.44772 2.44772 3 3 3H10.4142L12.4142 5Z"/></svg>
<svg style="position:absolute;left:2436px;top:877.5px;" width="40" height="40" viewBox="0 0 24 24" fill="#2c56b8"><path d="M14 13.5V8C14 5.79086 12.2091 4 10 4C7.79086 4 6 5.79086 6 8V13.5C6 17.0899 8.91015 20 12.5 20C16.0899 20 19 17.0899 19 13.5V4H21V13.5C21 18.1944 17.1944 22 12.5 22C7.80558 22 4 18.1944 4 13.5V8C4 4.68629 6.68629 2 10 2C13.3137 2 16 4.68629 16 8V13.5C16 15.433 14.433 17 12.5 17C10.567 17 9 15.433 9 13.5V8H11V13.5C11 14.3284 11.6716 15 12.5 15C13.3284 15 14 14.3284 14 13.5Z"/></svg>
<svg style="position:absolute;left:2497px;top:877.5px;" width="40" height="40" viewBox="0 0 24 24" fill="#2c56b8"><path d="M12.0003 3C17.3924 3 21.8784 6.87976 22.8189 12C21.8784 17.1202 17.3924 21 12.0003 21C6.60812 21 2.12215 17.1202 1.18164 12C2.12215 6.87976 6.60812 3 12.0003 3ZM12.0003 19C16.2359 19 19.8603 16.052 20.7777 12C19.8603 7.94803 16.2359 5 12.0003 5C7.7646 5 4.14022 7.94803 3.22278 12C4.14022 16.052 7.7646 19 12.0003 19ZM12.0003 16.5C9.51498 16.5 7.50026 14.4853 7.50026 12C7.50026 9.51472 9.51498 7.5 12.0003 7.5C14.4855 7.5 16.5003 9.51472 16.5003 12C16.5003 14.4853 14.4855 16.5 12.0003 16.5ZM12.0003 14.5C13.381 14.5 14.5003 13.3807 14.5003 12C14.5003 10.6193 13.381 9.5 12.0003 9.5C10.6196 9.5 9.50026 10.6193 9.50026 12C9.50026 13.3807 10.6196 14.5 12.0003 14.5Z"/></svg>
<svg style="position:absolute;left:2558px;top:877.5px;" width="40" height="40" viewBox="0 0 24 24" fill="#2c56b8"><path d="M10.7577 11.8281L18.6066 3.97919L20.0208 5.3934L18.6066 6.80761L21.0815 9.28249L19.6673 10.6967L17.1924 8.22183L15.7782 9.63604L17.8995 11.7574L16.4853 13.1716L14.364 11.0503L12.1719 13.2423C13.4581 15.1837 13.246 17.8251 11.5355 19.5355C9.58291 21.4882 6.41709 21.4882 4.46447 19.5355C2.51184 17.5829 2.51184 14.4171 4.46447 12.4645C6.17493 10.754 8.81633 10.5419 10.7577 11.8281ZM10.1213 18.1213C11.2929 16.9497 11.2929 15.0503 10.1213 13.8787C8.94975 12.7071 7.05025 12.7071 5.87868 13.8787C4.70711 15.0503 4.70711 16.9497 5.87868 18.1213C7.05025 19.2929 8.94975 19.2929 10.1213 18.1213Z"/></svg>
<svg style="position:absolute;left:2620px;top:877.5px;" width="40" height="40" viewBox="0 0 24 24" fill="#2c56b8"><path d="M17 6H22V8H20V21C20 21.5523 19.5523 22 19 22H5C4.44772 22 4 21.5523 4 21V8H2V6H7V3C7 2.44772 7.44772 2 8 2H16C16.5523 2 17 2.44772 17 3V6ZM18 8H6V20H18V8ZM9 11H11V17H9V11ZM13 11H15V17H13V11ZM9 4V6H15V4H9Z"/></svg>
<div style="position:absolute;left:702px;top:975.5px;width:28px;height:28px;box-sizing:border-box;border:4px solid #8b8c97;border-radius:4px"></div>
<div class="t" style="left:789.40px;top:976.34px;font-size:27px;line-height:27px;color:#3e4c5c;transform:scaleX(0.8800);">6</div>
<div class="t b" style="left:857.00px;top:973.11px;font-size:32px;line-height:32px;font-weight:700;color:#2c56b8;transform:scaleX(0.8950);text-decoration:underline;text-decoration-thickness:2px;text-underline-offset:2px;">Tree Planting for Urban Areas</div>
<div class="t" style="left:1499.60px;top:976.34px;font-size:27px;line-height:27px;color:#3e4c5c;transform:scaleX(0.9908);">Environment</div>
<div class="t" style="left:1756.80px;top:976.34px;font-size:27px;line-height:27px;color:#3e4c5c;transform:scaleX(0.9295);">Sedep</div>
<div class="t" style="left:1942.25px;top:976.34px;font-size:27px;line-height:27px;color:#3e4c5c;transform:scaleX(0.9000);">0</div>
<div style="position:absolute;left:2077px;top:972.0px;width:65px;height:35px;background:#f0f2f5;border-radius:8px"></div>
<div class="t b" style="left:2092.94px;top:976.34px;font-size:27px;line-height:27px;font-weight:700;color:#3e4c5c;transform:scaleX(0.9200);">No</div>
<svg style="position:absolute;left:2312px;top:971.5px;" width="40" height="40" viewBox="0 0 24 24" fill="#2c56b8"><path d="M15.7279 9.57627L14.3137 8.16206L5 17.4758V18.89H6.41421L15.7279 9.57627ZM17.1421 8.16206L18.5563 6.74785L17.1421 5.33363L15.7279 6.74785L17.1421 8.16206ZM7.24264 20.89H3V16.6473L16.435 3.21231C16.8256 2.82179 17.4587 2.82179 17.8492 3.21231L20.6777 6.04074C21.0682 6.43126 21.0682 7.06443 20.6777 7.45495L7.24264 20.89Z"/></svg>
<svg style="position:absolute;left:2373px;top:971.5px;" width="40" height="40" viewBox="0 0 24 24" fill="#2c56b8"><path d="M4 5V19H20V7H11.5858L9.58579 5H4ZM12.4142 5H21C21.5523 5 22 5.44772 22 6V20C22 20.5523 21.5523 21 21 21H3C2.44772 21 2 20.5523 2 20V4C2 3.44772 2.44772 3 3 3H10.4142L12.4142 5Z"/></svg>
<svg style="position:absolute;left:2436px;top:971.5px;" width="40" height="40" viewBox="0 0 24 24" fill="#2c56b8"><path d="M14 13.5V8C14 5.79086 12.2091 4 10 4C7.79086 4 6 5.79086 6 8V13.5C6 17.0899 8.91015 20 12.5 20C16.0899 20 19 17.0899 19 13.5V4H21V13.5C21 18.1944 17.1944 22 12.5 22C7.80558 22 4 18.1944 4 13.5V8C4 4.68629 6.68629 2 10 2C13.3137 2 16 4.68629 16 8V13.5C16 15.433 14.433 17 12.5 17C10.567 17 9 15.433 9 13.5V8H11V13.5C11 14.3284 11.6716 15 12.5 15C13.3284 15 14 14.3284 14 13.5Z"/></svg>
<svg style="position:absolute;left:2497px;top:971.5px;" width="40" height="40" viewBox="0 0 24 24" fill="#2c56b8"><path d="M12.0003 3C17.3924 3 21.8784 6.87976 22.8189 12C21.8784 17.1202 17.3924 21 12.0003 21C6.60812 21 2.12215 17.1202 1.18164 12C2.12215 6.87976 6.60812 3 12.0003 3ZM12.0003 19C16.2359 19 19.8603 16.052 20.7777 12C19.8603 7.94803 16.2359 5 12.0003 5C7.7646 5 4.14022 7.94803 3.22278 12C4.14022 16.052 7.7646 19 12.0003 19ZM12.0003 16.5C9.51498 16.5 7.50026 14.4853 7.50026 12C7.50026 9.51472 9.51498 7.5 12.0003 7.5C14.4855 7.5 16.5003 9.51472 16.5003 12C16.5003 14.4853 14.4855 16.5 12.0003 16.5ZM12.0003 14.5C13.381 14.5 14.5003 13.3807 14.5003 12C14.5003 10.6193 13.381 9.5 12.0003 9.5C10.6196 9.5 9.50026 10.6193 9.50026 12C9.50026 13.3807 10.6196 14.5 12.0003 14.5Z"/></svg>
<svg style="position:absolute;left:2558px;top:971.5px;" width="40" height="40" viewBox="0 0 24 24" fill="#2c56b8"><path d="M10.7577 11.8281L18.6066 3.97919L20.0208 5.3934L18.6066 6.80761L21.0815 9.28249L19.6673 10.6967L17.1924 8.22183L15.7782 9.63604L17.8995 11.7574L16.4853 13.1716L14.364 11.0503L12.1719 13.2423C13.4581 15.1837 13.246 17.8251 11.5355 19.5355C9.58291 21.4882 6.41709 21.4882 4.46447 19.5355C2.51184 17.5829 2.51184 14.4171 4.46447 12.4645C6.17493 10.754 8.81633 10.5419 10.7577 11.8281ZM10.1213 18.1213C11.2929 16.9497 11.2929 15.0503 10.1213 13.8787C8.94975 12.7071 7.05025 12.7071 5.87868 13.8787C4.70711 15.0503 4.70711 16.9497 5.87868 18.1213C7.05025 19.2929 8.94975 19.2929 10.1213 18.1213Z"/></svg>
<svg style="position:absolute;left:2620px;top:971.5px;" width="40" height="40" viewBox="0 0 24 24" fill="#2c56b8"><path d="M17 6H22V8H20V21C20 21.5523 19.5523 22 19 22H5C4.44772 22 4 21.5523 4 21V8H2V6H7V3C7 2.44772 7.44772 2 8 2H16C16.5523 2 17 2.44772 17 3V6ZM18 8H6V20H18V8ZM9 11H11V17H9V11ZM13 11H15V17H13V11ZM9 4V6H15V4H9Z"/></svg>
<div class="t b" style="left:678.00px;top:1064.76px;font-size:31px;line-height:31px;font-weight:700;color:#020203;transform:scaleX(0.9156);">Finished votes:</div>
<div class="t" style="left:895.00px;top:1064.76px;font-size:31px;line-height:31px;color:#020203;transform:scaleX(0.8116);">0</div>
<div style="position:absolute;left:925px;top:1067px;width:2.5px;height:31px;background:#020203"></div>
<div class="t b" style="left:944.40px;top:1064.76px;font-size:31px;line-height:31px;font-weight:700;color:#020203;transform:scaleX(0.9500);">Pending votes: 0</div>
<div style="position:absolute;left:676px;top:339px;width:400px;height:281.5px;box-sizing:border-box;border:2px solid #cacaca;background:#fefefe;box-shadow:0 4px 12px rgba(0,0,0,0.10)"></div>
<div class="t" style="left:711.00px;top:372.76px;font-size:31px;line-height:31px;color:#0a0a0a;transform:scaleX(0.9125);">Scope</div>
<div style="position:absolute;left:1034px;top:375px;width:0;height:0;border-style:solid;border-width:12px 0 12px 12px;border-color:transparent transparent transparent #3575b9"></div>
<div style="position:absolute;left:678px;top:434px;width:396px;height:93px;background:#2c56b8"></div>
<div class="t" style="left:711.00px;top:465.76px;font-size:31px;line-height:31px;color:#fff;transform:scaleX(0.9384);">Category</div>
<div style="position:absolute;left:1034px;top:468px;width:0;height:0;border-style:solid;border-width:12px 0 12px 12px;border-color:transparent transparent transparent #3a6fb6"></div>
<div class="t" style="left:711.00px;top:558.76px;font-size:31px;line-height:31px;color:#0a0a0a;transform:scaleX(0.9317);">Selected</div>
<div style="position:absolute;left:1034px;top:561px;width:0;height:0;border-style:solid;border-width:12px 0 12px 12px;border-color:transparent transparent transparent #3575b9"></div>
<div style="position:absolute;left:1074px;top:432px;width:400px;height:746px;box-sizing:border-box;border:2px solid #cacaca;background:#fefefe;box-shadow:0 4px 12px rgba(0,0,0,0.10)"></div>
<div class="t" style="left:1109.00px;top:466.26px;font-size:31px;line-height:31px;color:#0a0a0a;transform:scaleX(0.9509);">Water Management</div>
<div class="t" style="left:1109.00px;top:558.76px;font-size:31px;line-height:31px;color:#0a0a0a;transform:scaleX(0.9871);">Infrastructure</div>
<div style="position:absolute;left:1432px;top:560.0px;width:0;height:0;border-style:solid;border-width:12px 0 12px 12px;border-color:transparent transparent transparent #3575b9"></div>
<div style="position:absolute;left:1076px;top:619px;width:396px;height:92.5px;background:#2c56b8"></div>
<div class="t" style="left:1109.00px;top:651.26px;font-size:31px;line-height:31px;color:#fff;transform:scaleX(0.9321);">Renewable Energy</div>
<div style="position:absolute;left:1432px;top:652.5px;width:0;height:0;border-style:solid;border-width:12px 0 12px 12px;border-color:transparent transparent transparent #3a6fb6"></div>
<div class="t" style="left:1109.00px;top:743.76px;font-size:31px;line-height:31px;color:#0a0a0a;transform:scaleX(0.9600);">Healthcare</div>
<div style="position:absolute;left:1432px;top:745.0px;width:0;height:0;border-style:solid;border-width:12px 0 12px 12px;border-color:transparent transparent transparent #3575b9"></div>
<div class="t" style="left:1109.00px;top:836.26px;font-size:31px;line-height:31px;color:#0a0a0a;transform:scaleX(0.9902);">Agriculture</div>
<div class="t" style="left:1109.00px;top:928.76px;font-size:31px;line-height:31px;color:#0a0a0a;transform:scaleX(0.9868);">Environment</div>
<div class="t" style="left:1109.00px;top:1021.26px;font-size:31px;line-height:31px;color:#0a0a0a;transform:scaleX(0.9645);">Education</div>
<div class="t" style="left:1109.00px;top:1113.76px;font-size:31px;line-height:31px;color:#0a0a0a;transform:scaleX(0.9412);">Waste Management</div>
<div style="position:absolute;left:1472px;top:617px;width:400px;height:189.5px;box-sizing:border-box;border:2px solid #cacaca;background:#fefefe;box-shadow:0 4px 12px rgba(0,0,0,0.10)"></div>
<div class="t" style="left:1506.50px;top:651.26px;font-size:31px;line-height:31px;color:#0a0a0a;transform:scaleX(0.9500);">Wind energy</div>
<div class="t" style="left:1506.50px;top:744.26px;font-size:31px;line-height:31px;color:#0a0a0a;transform:scaleX(0.9474);">Solar energy</div>
</body></html>
